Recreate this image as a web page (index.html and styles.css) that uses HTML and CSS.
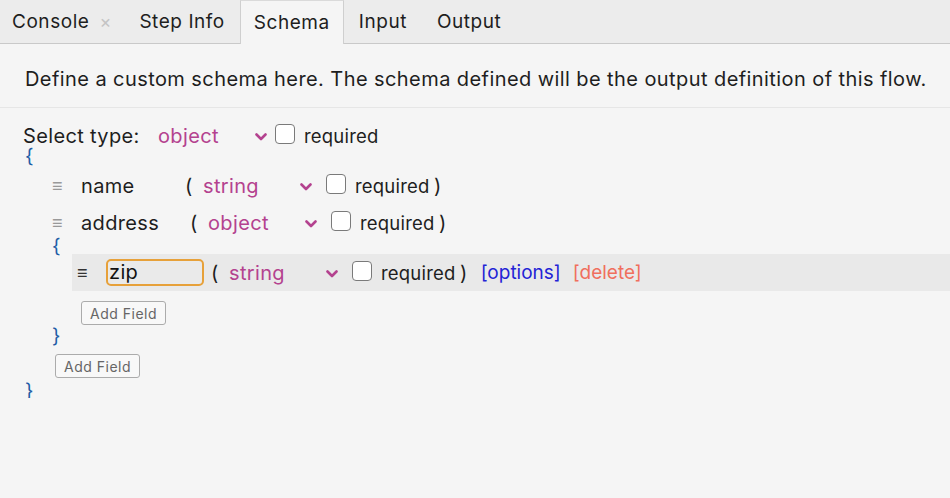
FILE: index.html
```html
<!DOCTYPE html>
<html>
<head>
<meta charset="utf-8">
<link rel="stylesheet" href="styles.css">
</head>
<body>
<div class="tabbar">
  <div class="tab tab-console">Console <span class="close">×</span></div>
  <div class="tab">Step Info</div>
  <div class="tab active">Schema</div>
  <div class="tab">Input</div>
  <div class="tab">Output</div>
</div>
<div class="desc">Define a custom schema here. The schema defined will be the output definition of this flow.</div>
<div class="schema">
  <div class="toprow">
    <span class="label">Select type:</span>
    <span class="type type-top">object<svg class="chev" viewBox="0 0 12 8" width="12" height="8"><path d="M1.5 1.5 L6 6 L10.5 1.5" fill="none" stroke="#b4428f" stroke-width="2.6" stroke-linecap="round" stroke-linejoin="round"/></svg></span>
    <span class="check"></span><span class="req">required</span>
  </div>
  <div class="brace brace-first">{</div>
  <div class="fields">
    <div class="row">
      <span class="handle">≡</span>
      <span class="fname w-name">name</span>
      <span class="paren">(</span>
      <span class="type">string<svg class="chev" viewBox="0 0 12 8" width="12" height="8"><path d="M1.5 1.5 L6 6 L10.5 1.5" fill="none" stroke="#b4428f" stroke-width="2.6" stroke-linecap="round" stroke-linejoin="round"/></svg></span>
      <span class="check"></span><span class="req">required</span><span class="paren-close">)</span>
    </div>
    <div class="row">
      <span class="handle">≡</span>
      <span class="fname w-addr">address</span>
      <span class="paren">(</span>
      <span class="type">object<svg class="chev" viewBox="0 0 12 8" width="12" height="8"><path d="M1.5 1.5 L6 6 L10.5 1.5" fill="none" stroke="#b4428f" stroke-width="2.6" stroke-linecap="round" stroke-linejoin="round"/></svg></span>
      <span class="check"></span><span class="req">required</span><span class="paren-close">)</span>
    </div>
    <div class="nested">
      <div class="brace brace-open">{</div>
      <div class="fields nested-fields">
        <div class="row row-active">
          <span class="handle handle-dark">≡</span>
          <span class="zip-input">zip</span>
          <span class="paren">(</span>
          <span class="type">string<svg class="chev" viewBox="0 0 12 8" width="12" height="8"><path d="M1.5 1.5 L6 6 L10.5 1.5" fill="none" stroke="#b4428f" stroke-width="2.6" stroke-linecap="round" stroke-linejoin="round"/></svg></span>
          <span class="check"></span><span class="req">required</span><span class="paren-close">)</span>
          <span class="options">[options]</span>
          <span class="delete">[delete]</span>
        </div>
      </div>
      <button class="add add-nested">Add Field</button>
      <div class="brace brace-close">}</div>
    </div>
  </div>
  <button class="add add-top">Add Field</button>
  <div class="brace brace-close brace-last">}</div>
</div>
</body>
</html>
```
FILE: styles.css
```css
html, body {
  margin: 0;
  padding: 0;
  background: #f5f5f5;
  font-family: Inter, "Noto Sans", sans-serif;
  color: #1e1e1e;
}

.tabbar {
  display: flex;
  height: 43px;
  background: #ececec;
  border-bottom: 1px solid #c9c9c9;
  font-size: 19px;
  letter-spacing: 0.55px;
  align-items: stretch;
}

.tab {
  display: flex;
  align-items: center;
  padding: 0 15px 1px 15px;
  white-space: nowrap;
}

.tab-console {
  padding-left: 12px;
  padding-right: 13px;
}

.close {
  color: #c4c4c4;
  font-size: 18px;
  margin-left: 10px;
  letter-spacing: 0;
}

.tab.active {
  background: #f5f5f5;
  border-left: 1px solid #cfcfcf;
  border-right: 1px solid #cfcfcf;
  border-top: 1px solid #dadada;
  margin-bottom: -1px;
  padding-left: 13px;
  padding-right: 13px;
}

.desc {
  font-size: 20px;
  letter-spacing: 0.42px;
  line-height: 26px;
  padding: 22px 25px 15px 25px;
  border-bottom: 1px solid #e6e6e6;
  white-space: nowrap;
}

.schema {
  padding: 15px 0 0 23px;
  font-size: 20px;
  letter-spacing: 0.35px;
}

.toprow {
  display: flex;
  align-items: center;
  height: 26px;
}

.label {
  width: 135px;
}

.type {
  display: inline-flex;
  align-items: center;
  color: #b4428f;
  width: 98px;
  position: relative;
  margin-right: 25px;
}

.type .chev {
  position: absolute;
  left: 97px;
  top: 50%;
  margin-top: -3px;
}

.type-top {
  margin-right: 19px;
}

.check {
  display: inline-block;
  width: 18px;
  height: 18px;
  border: 1px solid #7a7a7a;
  border-radius: 4px;
  background: #fff;
  box-sizing: content-box;
  margin-right: 9px;
  margin-top: -4px;
}

.req {
  font-size: 18.5px;
  letter-spacing: 0.2px;
  width: 78px;
}

.brace {
  color: #1f5ea6;
  line-height: 12px;
  height: 12px;
  padding-left: 2px;
  letter-spacing: 0;
}

.brace-first {
  margin-top: 1px;
}

.fields {
  margin-left: 23px;
  margin-top: 5px;
}

.row {
  display: flex;
  align-items: center;
  height: 37px;
  padding-left: 6px;
}

.handle {
  color: #999;
  width: 29px;
  font-size: 18px;
}

.handle-dark {
  color: #333;
}

.fname {
  display: inline-block;
}

.w-name { width: 104px; }
.w-addr { width: 109px; }

.paren {
  width: 18px;
}

.nested .brace-open {
  line-height: 10px;
  height: 10px;
  padding-left: 6px;
}

.fields.nested-fields {
  margin-top: 3px;
  margin-left: 26px;
}

.row-active {
  background: #e9e9e9;
  padding-left: 5px;
}

.zip-input {
  display: inline-block;
  box-sizing: border-box;
  width: 98px;
  height: 27px;
  line-height: 23px;
  border: 2px solid #e7a13a;
  border-radius: 5px;
  padding-left: 1px;
  color: #111;
  margin-right: 7px;
  background: #eaeaea;
}

.paren-close {
  margin-left: 1px;
}

.options {
  color: #2323d6;
  margin-left: 13px;
  font-size: 19px;
  letter-spacing: 0;
}

.delete {
  color: #f06f5d;
  margin-left: 12px;
  font-size: 19px;
  letter-spacing: 0;
}

.add {
  display: block;
  font-family: Inter, "Noto Sans", sans-serif;
  font-size: 14px;
  letter-spacing: 0.5px;
  color: #666;
  background: #f8f8f8;
  border: 1px solid #ababab;
  border-radius: 3px;
  height: 24px;
  padding: 0 8px;
}

.add-nested {
  margin-top: 10px;
  margin-left: 35px;
}

.add-top {
  margin-top: 11px;
  margin-left: 32px;
}

.brace-close {
  margin-top: 4px;
  line-height: 14px;
  height: 14px;
}

.brace-last {
  margin-top: 6px;
}

.nested .brace-close {
  padding-left: 6px;
}
```
